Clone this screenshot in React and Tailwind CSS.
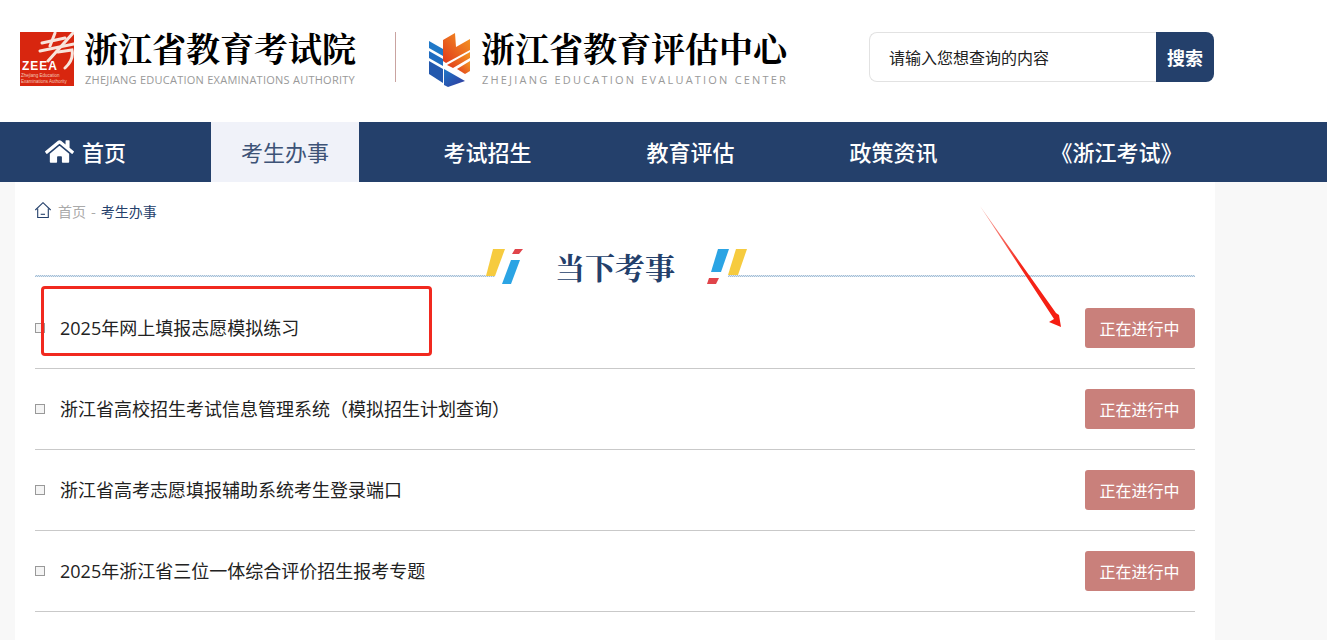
import { FaHome } from 'react-icons/fa';

const font = "font-['Microsoft_YaHei','Noto_Sans_CJK_SC',sans-serif]";

const navItems = ['考试招生', '教育评估', '政策资讯', '《浙江考试》'];

const rows = [
  '2025年网上填报志愿模拟练习',
  '浙江省高校招生考试信息管理系统（模拟招生计划查询）',
  '浙江省高考志愿填报辅助系统考生登录端口',
  '2025年浙江省三位一体综合评价招生报考专题',
];

function ZeeaLogo() {
  return (
    <div className="relative w-[54px] h-[54px] bg-[#d8260f] overflow-hidden shrink-0">
      <svg viewBox="0 0 54 54" className="absolute inset-0 w-full h-full">
        <g stroke="#f8e4dc" fill="none" strokeLinecap="round">
          <path d="M22 11 L45 6" strokeWidth="3" />
          <path d="M35 1 L30 14" strokeWidth="3" />
          <path d="M20 19 L54 12" strokeWidth="3" />
          <path d="M53 1 L28 29" strokeWidth="3" />
          <path d="M38 20 L52 18 Q54 28 45 36" strokeWidth="3" />
        </g>
      </svg>
      <span className="absolute left-[2px] top-[28px] text-[12px] leading-[12px] tracking-[1px] font-bold text-white font-['Liberation_Sans',sans-serif]">ZEEA</span>
      <span className="absolute left-[1px] top-[41px] text-[4.5px] leading-[6px] text-[#f3c8b8] font-['Liberation_Sans',sans-serif] whitespace-nowrap">
        Zhejiang Education
        <br />
        Examinations Authority
      </span>
    </div>
  );
}

function EvalLogo() {
  return (
    <svg viewBox="0 0 42 54" className="w-[42px] h-[54px] shrink-0">
      <defs>
        <linearGradient id="eo" x1="0" y1="1" x2="1" y2="0">
          <stop offset="0" stopColor="#e0391c" />
          <stop offset="1" stopColor="#f59a23" />
        </linearGradient>
        <linearGradient id="eb" x1="0" y1="0" x2="1" y2="1">
          <stop offset="0" stopColor="#1f78c8" />
          <stop offset="1" stopColor="#31389c" />
        </linearGradient>
      </defs>
      <path d="M14 7 L26 0 L27 14 L41 6 L41 17 L17 30 L14 28 Z" fill="url(#eo)" />
      <path d="M18 32 L41 19 L41 25 L24 35 Z" fill="url(#eo)" />
      <path d="M28 36 L41 28 L41 38 L36 41 Z" fill="url(#eo)" />
      <path d="M0 8 L14 16 L14 23 L0 15 Z" fill="#1f78c8" />
      <path d="M0 18 L14 26 L14 33 L0 25 Z" fill="#1f6cc0" />
      <path d="M0 28 L14 36 L14 50 L0 41 Z" fill="#2358ad" />
      <path d="M15 36 L36 48 L19 54 L15 52 Z" fill="url(#eb)" />
    </svg>
  );
}

function LeftMark() {
  return (
    <svg viewBox="0 0 37 35" className="w-[37px] h-[35px] shrink-0">
      <path d="M7 0 L19 0 L9 27 L0 27 Z" fill="#f6cb3f" />
      <path d="M25 11 L34 11 L25 35 L16 35 Z" fill="#2ba4e4" />
      <path d="M29 0 L37 0 L33 5 L26 5 Z" fill="#e0444a" />
    </svg>
  );
}

function RightMark() {
  return (
    <svg viewBox="0 0 40 35" className="w-[40px] h-[35px] shrink-0">
      <path d="M11 0 L22 0 L14 23 L4 23 Z" fill="#2ba4e4" />
      <path d="M29 0 L40 0 L31 26 L21 26 Z" fill="#f6cb3f" />
      <path d="M2 29 L12 29 L9 35 L0 35 Z" fill="#e0444a" />
    </svg>
  );
}

function Arrow() {
  return (
    <svg viewBox="0 0 90 125" className="absolute left-[980px] top-[206px] w-[90px] h-[125px] pointer-events-none">
      <defs>
        <linearGradient id="ar" x1="0" y1="0" x2="1" y2="1">
          <stop offset="0" stopColor="#f8b0a8" />
          <stop offset="0.5" stopColor="#f5261a" />
          <stop offset="1" stopColor="#f51b10" />
        </linearGradient>
      </defs>
      <path d="M0 0 L76 107 L79 109 L81 121 L69 116 L74 113 Z" fill="url(#ar)" />
    </svg>
  );
}

function CrumbHome() {
  return (
    <svg viewBox="0 0 16 16" fill="none" stroke="#24406b" strokeWidth="1.1" className="w-4 h-4 -mt-[3px] shrink-0">
      <path d="M0.3 8 L8 0.7 L15.7 8" />
      <path d="M2.7 6.5 V15.5 H13.3 V6.5" />
      <path d="M5.7 12.3 H10" />
    </svg>
  );
}

export default function App() {
  return (
    <div className={`relative h-[640px] overflow-hidden bg-[#f8f8f8] ${font}`}>
      {/* header */}
      <header className="h-[122px] bg-white flex items-start">
        <div className="flex items-start pl-5 pt-[32px]">
          <ZeeaLogo />
          <div className="ml-[10px] w-[272px]">
            <div className="-mt-[1px] text-[34px] leading-[34px] font-bold text-black font-['Noto_Serif_CJK_SC','Noto_Sans_CJK_SC',serif] whitespace-nowrap">
              浙江省教育考试院
            </div>
            <div className="mt-[8px] ml-[1px] text-[11px] leading-[14px] tracking-[0.25px] text-[#999] font-['Open_Sans',sans-serif] whitespace-nowrap">
              ZHEJIANG EDUCATION EXAMINATIONS AUTHORITY
            </div>
          </div>
          <div className="ml-[39px] w-px h-[50px] bg-[#c9a3a0]" />
          <div className="ml-[33px] mt-[1px]">
            <EvalLogo />
          </div>
          <div className="ml-[10px] w-[306px]">
            <div className="-mt-[1px] text-[34px] leading-[34px] font-bold text-black font-['Noto_Serif_CJK_SC','Noto_Sans_CJK_SC',serif] whitespace-nowrap">
              浙江省教育评估中心
            </div>
            <div className="mt-[8px] ml-[1px] text-[11px] leading-[14px] tracking-[2.2px] text-[#999] font-['Open_Sans',sans-serif] whitespace-nowrap">
              ZHEJIANG EDUCATION EVALUATION CENTER
            </div>
          </div>
        </div>
        <div className="ml-[82px] mt-[32px] flex h-[50px] w-[345px]">
          <div className="flex-1 flex items-center pl-[19px] border border-[#e2e2e2] border-r-0 rounded-l-[8px] text-[16px] text-[#222]">
            请输入您想查询的内容
          </div>
          <div className="w-[58px] flex items-center justify-center bg-[#24406b] rounded-r-[8px] text-[18px] font-bold text-white">
            搜索
          </div>
        </div>
      </header>

      {/* nav */}
      <nav className="h-[60px] bg-[#24406b] flex text-[22px] font-medium text-white">
        <div className="w-[211px] flex items-center pl-[45px] gap-[8px] pb-[2px]">
          <FaHome className="text-[29px]" />
          首页
        </div>
        <div className="w-[148px] flex items-center justify-center bg-[#f0f2f9] text-[#3d5377] font-normal pb-[2px]">
          考生办事
        </div>
        <div className="flex pl-[27px]">
          {navItems.map((item) => (
            <div key={item} className="w-[203px] last:pl-10 pb-[2px] flex items-center justify-center">
              {item}
            </div>
          ))}
        </div>
      </nav>

      {/* content */}
      <main className="ml-[15px] w-[1200px] h-[458px] bg-white px-5">
        <div className="flex items-center h-[60px] pb-[1px] text-[14px]">
          <CrumbHome />
          <span className="ml-[7px] text-[#aaa]">首页</span>
          <span className="mx-[5px] text-[#aaa]">-</span>
          <span className="text-[#24406b]">考生办事</span>
        </div>

        <div className="relative h-[46px]">
          <div className="absolute left-0 w-[460px] top-[33px] h-[2px] bg-[conic-gradient(#a3bfd8_25%,#dfe8f0_0_50%,#a3bfd8_0_75%,#dfe8f0_0)] bg-[length:2px_2px]" />
          <div className="absolute left-[693px] right-0 top-[33px] h-[2px] bg-[conic-gradient(#a3bfd8_25%,#dfe8f0_0_50%,#a3bfd8_0_75%,#dfe8f0_0)] bg-[length:2px_2px]" />
          <div className="absolute left-[451px] top-[7px] flex items-start">
            <LeftMark />
            <span className="w-[184px] text-center text-[30px] leading-[34px] font-bold text-[#24406b] font-['Noto_Serif_CJK_SC','Noto_Sans_CJK_SC',serif]">
              当下考事
            </span>
            <RightMark />
          </div>
        </div>

        <ul>
          {rows.map((row) => (
            <li key={row} className="h-[81px] flex items-center justify-between border-b border-[#c9c9c9]">
              <div className="flex items-center">
                <span className="w-[10px] h-[10px] border border-[#999] bg-[#f4f4f4]" />
                <span className="ml-[15px] text-[18px] text-[#222] font-['Open_Sans','Noto_Sans_CJK_SC',sans-serif]">{row}</span>
              </div>
              <span className="w-[110px] h-[40px] pr-[1px] pb-[1px] flex items-center justify-center rounded-[3px] bg-[#c9807b] text-[16px] text-white">
                正在进行中
              </span>
            </li>
          ))}
        </ul>
      </main>

      {/* annotations on the screenshot */}
      <div className="absolute left-[41px] top-[286px] w-[391px] h-[70px] border-[3px] border-[#f1291f] rounded-[4px] pointer-events-none" />
      <Arrow />
    </div>
  );
}
